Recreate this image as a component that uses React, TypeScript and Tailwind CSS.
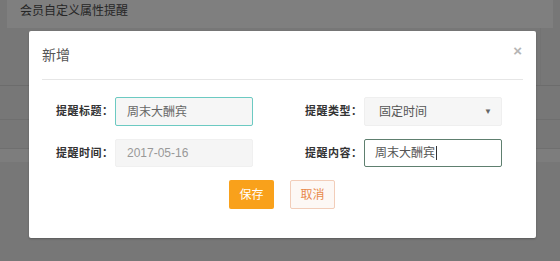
export default function App() {
  const font = "font-['Liberation_Sans','Noto_Sans_CJK_SC',sans-serif]";
  return (
    <div className={`relative w-[560px] h-[261px] overflow-hidden bg-[#777777] ${font}`}>
      {/* page behind the overlay */}
      <div className="mx-[7px] h-[28px] bg-[#7f7f7f] px-[13px] pt-[2px] text-[12px] leading-[18px] text-[#262626]">
        会员自定义属性提醒
      </div>
      <div className="h-[57px] border-r border-[#737373] mr-[19px]" />
      <div className="h-[34px] border-t border-[#6c6c6c]" />
      <div className="h-[29px] border-t border-[#6f6f6f]" />
      <div className="h-[14px] border-t border-[#6f6f6f] bg-[#7d7d7d]" />

      {/* modal */}
      <div className="absolute left-[29px] top-[31px] w-[507px] h-[207px] bg-white rounded-[2px] shadow-[0_1px_2px_rgba(0,0,0,0.25)]">
        <div className="mx-[13px] h-[49px] flex items-center justify-between border-b border-[#e6e6e6]">
          <span className="text-[14px] text-[#555] pt-[1px]">新增</span>
          <span className="text-[15px] font-bold text-[#b5b5b5] pr-[1px] -mt-[8px]">×</span>
        </div>

        <div className="pl-[27px] pt-[17px]">
          <div className="flex items-center h-[29px]">
            <Label text="提醒标题：" />
            <div className="w-[138px] h-[29px] flex items-center pl-[11px] border border-[#6ccac2] bg-[#f6f6f6] rounded-[2px] text-[12px] text-[#666]">
              周末大酬宾
            </div>
            <div className="w-[52px]" />
            <Label text="提醒类型：" />
            <div className="w-[138px] h-[29px] flex items-center justify-between pl-[14px] pr-[9px] border border-[#efefef] bg-[#f6f6f6] rounded-[2px] text-[12px] text-[#555]">
              <span>固定时间</span>
              <span className="text-[8px] text-[#666]">▼</span>
            </div>
          </div>

          <div className="flex items-center h-[28px] mt-[13px]">
            <Label text="提醒时间：" />
            <div className="w-[138px] h-[28px] flex items-center pl-[11px] border border-[#f0f0f0] bg-[#f5f5f5] rounded-[2px] text-[12px] text-[#999]">
              2017-05-16
            </div>
            <div className="w-[52px]" />
            <Label text="提醒内容：" />
            <div className="w-[138px] h-[28px] flex items-center pl-[10px] border border-[#5e7f6f] bg-white rounded-[2px] text-[12px] text-[#555]">
              周末大酬宾
              <span className="w-px h-[14px] bg-[#333] ml-[1px]" />
            </div>
          </div>
        </div>

        <div className="flex justify-center gap-[16px] mt-[13px] pr-px">
          <button className="w-[45px] h-[29px] bg-[#f9a11b] text-white text-[12px] rounded-[2px]">
            保存
          </button>
          <button className="w-[45px] h-[29px] bg-[#fdf8f5] border border-[#f2cdb9] text-[#e8894a] text-[12px] rounded-[2px]">
            取消
          </button>
        </div>
      </div>
    </div>
  );
}

function Label({ text }: { text: string }) {
  return <span className="w-[59px] shrink-0 text-[11px] font-bold text-[#333] tracking-[0.5px]">{text}</span>;
}
